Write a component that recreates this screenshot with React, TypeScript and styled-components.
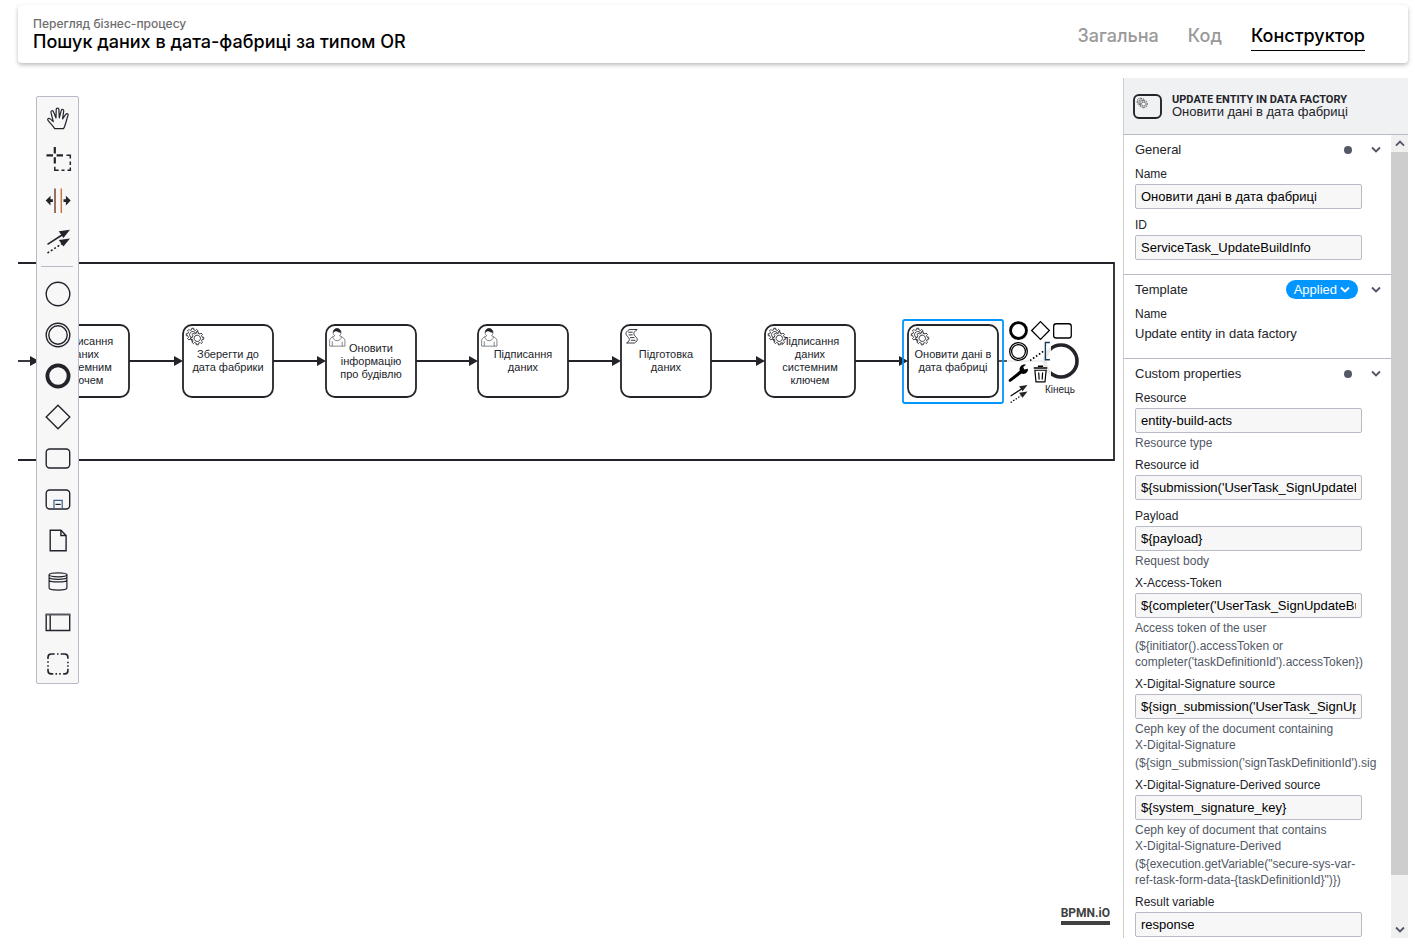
import React from 'react';
import styled, { createGlobalStyle, css } from 'styled-components';

const INK = '#22242a';
const BLUE = '#0095ff';
const LINE = '#b9bac8';

const GlobalStyle = createGlobalStyle`
  *, *::before, *::after { box-sizing: border-box; }
  body { margin: 0; background: #fff; font-family: "Liberation Sans", Arial, sans-serif; }
  button, input { font: inherit; color: inherit; }
`;

const Page = styled.div`
  display: flex;
  flex-direction: column;
  gap: 15px;
  height: 100vh;
  padding: 5px 7px 12px 18px;
`;

/* ---------- header ---------- */

const Header = styled.header`
  display: flex;
  justify-content: space-between;
  align-items: center;
  flex: none;
  height: 58px;
  padding: 0 43px 0 15px;
  border-radius: 4px;
  background: #fff;
  box-shadow: 0 2px 4px rgba(0, 0, 0, 0.27);
  font-family: Inter, "Liberation Sans", sans-serif;
`;

const Subtitle = styled.p`
  margin: 0;
  font-size: 12px;
  font-weight: 500;
  line-height: 16px;
  color: #6e6e6e;
`;

const Title = styled.h1`
  margin: 0;
  font-size: 18px;
  font-weight: 500;
  line-height: 20px;
  color: #000;
`;

const Tabs = styled.nav`
  display: flex;
  gap: 29px;
`;

const Tab = styled.a<{ $active?: boolean }>`
  padding-top: 4px;
  border-bottom: 1px solid ${p => (p.$active ? '#000' : 'transparent')};
  font-size: 18px;
  font-weight: 500;
  line-height: 28px;
  color: ${p => (p.$active ? '#000' : '#999')};
  text-decoration: none;
`;

/* ---------- workspace ---------- */

const Workspace = styled.main`
  display: flex;
  flex: 1;
  min-height: 0;
`;

const Canvas = styled.section`
  position: relative;
  flex: 1;
  min-width: 0;
  overflow: hidden;
`;

const Diagram = styled.svg`
  display: block;
  width: 100%;
  height: 100%;
`;

const TaskLabel = styled.text`
  font-size: 11px;
  fill: ${INK};
  text-anchor: middle;
`;

const EventLabel = styled(TaskLabel)`
  font-size: 10px;
`;

const Palette = styled.div`
  position: absolute;
  top: 18px;
  left: 18px;
  display: flex;
  flex-direction: column;
  width: 43px;
  border: 1px solid ${LINE};
  border-radius: 2px;
  background: #f7f7f8;
`;

const PaletteSeparator = styled.hr`
  width: 32px;
  margin: 5px auto 6px 4px;
  border: 0;
  border-top: 1px solid ${LINE};
`;

const iconButton = css`
  display: flex;
  align-items: center;
  justify-content: center;
  padding: 0;
  border: 0;
  background: none;
  cursor: pointer;
`;

const PaletteButton = styled.button`
  ${iconButton}
  height: 41px;
  padding-top: 1px;
`;

const ContextPad = styled.div`
  position: absolute;
  top: 242px;
  left: 989px;
  display: grid;
  grid-template-columns: repeat(3, 22px);
  grid-auto-rows: 21px;
`;

const PadButton = styled.button<{ $rowStart?: boolean }>`
  ${iconButton}
  ${p => p.$rowStart && 'grid-column-start: 1;'}
  background: rgba(255, 255, 255, 0.9);
`;

const Watermark = styled.a`
  position: absolute;
  right: 13px;
  bottom: 13px;
  border-bottom: 4px solid #404040;
  font-family: Roboto, "Liberation Sans", sans-serif;
  font-size: 12px;
  font-weight: 700;
  line-height: 16px;
  color: #404040;
  text-decoration: none;
`;

/* ---------- properties panel ---------- */

const Panel = styled.aside`
  display: flex;
  flex-direction: column;
  flex: none;
  width: 285px;
  border-left: 1px solid #ccc;
  color: ${INK};
`;

const PanelHeader = styled.div`
  display: flex;
  align-items: center;
  gap: 10px;
  flex: none;
  height: 57px;
  padding-left: 9px;
  border-bottom: 1px solid ${LINE};
  background: #f0f1f3;
`;

const ElementType = styled.div`
  font-family: Roboto, sans-serif;
  font-size: 11px;
  font-weight: 700;
  line-height: 12px;
  text-transform: uppercase;
`;

const ElementName = styled.div`
  font-size: 13px;
  line-height: 12px;
`;

const PanelBody = styled.div`
  display: flex;
  flex: 1;
  min-height: 0;
`;

const Groups = styled.div`
  flex: 1;
  min-width: 0;
  overflow: hidden;
`;

const Group = styled.section`
  padding: 0 29px 8px 11px;
  border-bottom: 1px solid ${LINE};
`;

const GroupHeader = styled.div`
  display: flex;
  align-items: center;
  height: 29px;
  margin-right: -20px;
`;

const GroupTitle = styled.h2`
  flex: 1;
  margin: 0;
  font-size: 13px;
  font-weight: 400;
`;

const Dot = styled.span`
  width: 8px;
  height: 8px;
  margin-right: 18px;
  border-radius: 50%;
  background: #525866;
`;

const Toggle = styled.button`
  ${iconButton}
  width: 12px;
  height: 20px;
`;

const Applied = styled.button`
  display: flex;
  align-items: center;
  gap: 3px;
  height: 19px;
  margin-right: 12px;
  padding: 0 8px;
  border: 0;
  border-radius: 10px;
  background: ${BLUE};
  color: #fff;
  font-size: 13px;
  line-height: 19px;
`;

const FieldBox = styled.div`
  padding-bottom: 6px;
`;

const Label = styled.label`
  display: block;
  font-size: 12px;
  line-height: 20px;
`;

const StaticLabel = styled.div`
  font-size: 12px;
  line-height: 20px;
`;

const StaticText = styled.div`
  font-size: 13px;
  line-height: 20px;
`;

const TextInput = styled.input`
  display: block;
  width: 100%;
  height: 25px;
  padding: 0 5px;
  border: 1px solid ${LINE};
  border-radius: 2px;
  background: #f7f7f8;
  color: #000;
  font-size: 13px;
`;

const Description = styled.div`
  margin: 2px 0 -2px;
  font-size: 12px;
  line-height: 16px;
  color: #525866;
  white-space: nowrap;
`;

const Expression = styled.div`
  margin-top: 2px;
`;

const Scrollbar = styled.div`
  display: flex;
  flex-direction: column;
  flex: none;
  width: 17px;
  background: #f0f0f0;
`;

const ScrollButton = styled.button`
  ${iconButton}
  height: 17px;
`;

const ScrollTrack = styled.div`
  flex: 1;
`;

const ScrollThumb = styled.div`
  height: 94%;
  background: #cdcdcd;
`;

/* ---------- icons ---------- */

type IconProps = { size?: number; children: React.ReactNode; color?: string; weight?: number };

const Icon = ({ size = 28, children, color = INK, weight = 1.4 }: IconProps) => (
  <svg width={size} height={size} viewBox="0 0 28 28" fill="none" stroke={color} strokeWidth={weight} aria-hidden="true">
    {children}
  </svg>
);

const Chevron = ({ up, color = '#525866', size = 10 }: { up?: boolean; color?: string; size?: number }) => (
  <svg width={size} height={size} viewBox="0 0 10 10" fill="none" stroke={color} strokeWidth={1.9} aria-hidden="true">
    <path d={up ? 'M1 6.7 5 2.7 9 6.7' : 'M1 2.5 5 6.5 9 2.5'} />
  </svg>
);

const hand = (
  <path
    strokeLinejoin="round"
    strokeWidth={1.2}
    d="M10.5 24.6C9.5 22 6.5 20 4 16.4C3 14.6 4.8 13.6 6.2 14.9L9.3 17.6L7 8.6C6.6 6.6 8.9 6 9.5 7.8L12 14L12.2 5.4C12.2 3.6 14.8 3.6 14.9 5.4L15.3 13.8L17.3 6.4C17.9 4.8 20 5.4 19.7 7.1L18.6 14.8L21.9 10.2C23 8.9 24.7 9.9 24 11.5C22.5 15 21.8 21 19.5 24.6Z"
  />
);

const lasso = (
  <>
    <path strokeWidth={2.2} d="M2.5 10.3H9M12.6 10.3H19M10.8 2V8.6M10.8 12.2V18.6" />
    <path strokeWidth={1.5} d="M22.5 10.3H26.3V13.5M26.3 16.5V20M26.3 22.5V25.2H23.5M20.5 25.2H17.5M14.7 25.2H10.8V21.8" />
  </>
);

const space = (
  <>
    <path stroke="#7d4238" strokeWidth={1.5} d="M11 2.5V27" />
    <path stroke="#c8763c" strokeWidth={1.5} d="M17.3 2.5V27" />
    <path fill={INK} stroke="none" d="M1.7 14.6 6.5 9.8V13.2H8.9V16H6.5V19.4ZM26.7 14.6 21.9 9.8V13.2H19.5V16H21.9V19.4Z" />
  </>
);

const connect = (
  <>
    <path strokeWidth={1.6} d="M3.5 17.4 18 8" />
    <path strokeWidth={1.6} strokeDasharray="2 2" d="M3.5 26 18 16.6" />
    <path fill={INK} stroke="none" d="M26 2.7 19.4 10.9 14.8 4.3ZM26 11.4 19.4 19.6 14.8 13Z" />
  </>
);

const startEvent = <circle cx={14} cy={14} r={11.8} />;
const intermediateEvent = (
  <>
    <circle cx={14} cy={14} r={11.8} />
    <circle cx={14} cy={14} r={9.2} />
  </>
);
const endEvent = <circle cx={14} cy={14} r={10.6} strokeWidth={3.8} />;
const gateway = <path d="M14 2.2 25.8 14 14 25.8 2.2 14Z" />;
const taskShape = <rect x={2.2} y={5} width={23.5} height={19} rx={3.5} />;

const subProcess = (
  <>
    <rect x={2.2} y={5} width={23.5} height={19} rx={3.5} />
    <path stroke="#3a5f8c" strokeWidth={1.2} d="M10 24V15.3H18.2V24" />
    <path strokeWidth={1.2} d="M11.5 19.4H16.7" />
  </>
);

const dataObject = <path d="M6.2 4.3H16.9L22.1 9.5V24.7H6.2ZM16.9 4.3V9.5H22.1" />;

const dataStore = (
  <>
    <ellipse cx={14} cy={7.8} rx={8.9} ry={2} strokeWidth={1.2} />
    <path
      strokeWidth={1.2}
      d="M5.1 7.8V21C5.1 23.7 22.9 23.7 22.9 21V7.8M5.1 10.3C5.1 13 22.9 13 22.9 10.3M5.1 12.9C5.1 15.6 22.9 15.6 22.9 12.9"
    />
  </>
);

const participant = (
  <>
    <path d="M2.2 6.5V22.5H25.7V6.5M6.2 6.5V22.5" />
    <path strokeWidth={2} stroke="#55575c" d="M1.5 6.5H26.4" />
  </>
);

const groupShape = (
  <path
    strokeWidth={1.6}
    d="M4 10V8.3Q4 5 7.2 5H10.7M13 5H14.5M16.7 5H20.7Q23.9 5 23.9 8.3V9.7M23.9 12.7V14.2M23.9 16.2V17.7M23.9 19.7V21.7Q23.9 24.9 20.7 24.9H19.2M16.7 24.9H15.2M13 24.9H11.5M9.2 24.9H7.2Q4 24.9 4 21.7V19.7M4 17.7V16.2M4 13.7V12.2"
  />
);

const annotation = (
  <>
    <path strokeWidth={2.2} strokeDasharray="2.2 2.6" d="M0 26 19 13" />
    <path strokeWidth={1.8} stroke="#173a5c" d="M26.5 2H20.5V25H26.5" />
  </>
);

const wrench = (
  <path
    fill="#000"
    stroke="none"
    d="M1.6 23 15.6 11.8C14.6 6.4 19 2.2 24 3.8L20.3 6.6 21.7 10 26.6 9C27 13.8 22.4 17.1 18.2 15.4L4 26C1.6 27-.2 24.8 1.6 23Z"
  />
);

const trash = (
  <>
    <path strokeWidth={2.2} d="M5 8H23M10.5 5.6H17.5" />
    <path strokeWidth={1.6} d="M6.5 11H21.5L20 26.6H8ZM11.6 14 12.2 23.5M16.8 14 16.2 23.5" />
  </>
);

const GEAR =
  'v-1.71335c.352326-.0705.703932-.17838 1.047628-.32133.344416-.14465.665822-.32133.966377-.52145l1.19431 1.18005 1.567487-1.57688-1.195028-1.18014c.403376-.61394.683079-1.29908.825447-2.01824l1.622133-.01v-2.2196l-1.636514.01c-.07333-.35153-.178319-.70024-.323564-1.04372-.145244-.34406-.321407-.6644-.522735-.96217l1.131035-1.13631-1.583305-1.56293-1.129598 1.13589c-.614052-.40108-1.302883-.68093-2.022633-.82247l.0093-1.61852h-2.241173l.0042 1.63124c-.353763.0736-.705369.17977-1.049785.32371-.344415.14437-.665102.32092-.9635006.52006l-1.1698628-1.15823-1.5667691 1.5792 1.1684265 1.15669c-.4026573.61283-.68308 1.29797-.8247287 2.01713l-1.6588041.003v2.22174l1.6724648-.006c.073327.35077.1797598.70243.3242851 1.04472.1452428.34448.3214064.6644.5227339.96066l-1.1993431 1.19723 1.5840256 1.56011 1.1964668-1.19348c.6140517.40346 1.3028827.68232 2.0233517.82331l.000719 1.69892h2.226848zm.221462-3.9957c-1.788948.7502-3.8576-.0928-4.6097055-1.87438-.7521065-1.78321.090598-3.84627 1.8802645-4.59604 1.78823-.74936 3.856881.0929 4.608987 1.87437.752106 1.78165-.0906 3.84612-1.879546 4.59605z';

const Gears = () => (
  <g fill="#fff" stroke={INK} strokeWidth={1}>
    <path d={`m12 18${GEAR}`} />
    <circle cx={16} cy={16} r={4.5} stroke="none" />
    <path d={`m17 22${GEAR}`} />
  </g>
);

const Person = () => (
  <g fill="#fff" stroke={INK} strokeWidth={0.6}>
    <path d="m15 12c.909-.845 1.594-2.049 1.594-3.385 0-2.554-1.805-4.622-4.357-4.622-2.552 0-4.288 2.068-4.288 4.622 0 1.348.974 2.562 1.896 3.405-.529.187-5.669 2.097-5.794 4.756v6.718h17v-6.718c0-2.298-5.528-4.595-6.051-4.776zm-8 6l0 5.5m11 0l0-5" />
    <path fill="none" d="m15 12m2.162 1.009c0 2.447-2.158 4.431-4.821 4.431-2.665 0-4.822-1.981-4.822-4.431" />
    <path fill={INK} d="m15 12m-6.9-3.8c0 0 2.251-2.358 4.274-1.177 2.024 1.181 4.221 1.537 4.124.965-.098-.57-.117-3.791-4.191-4.136-3.572-.001-4.208 3.367-4.207 4.348z" />
  </g>
);

const Script = () => (
  <path
    fill="none"
    stroke={INK}
    d="m15 20c9.966553-6.27276-8.000926-7.91932 2.968968-14.938l-8.802728 0c-10.969894 7.01868 6.997585 8.66524-2.968967 14.938zm-7-12l5 0m-4.5 3l4.5 0m-3 3l5 0m-4 3l5 0"
  />
);

/* ---------- diagram ---------- */

type TaskKind = 'service' | 'user' | 'script';
type TaskData = { x: number; kind: TaskKind; lines: string[] };

const MARKERS: Record<TaskKind, React.ReactNode> = {
  service: <Gears />,
  user: <Person />,
  script: <Script />,
};

const TASK_TOP = 247;
const TASK_WIDTH = 90;
const TASK_HEIGHT = 72;
const FLOW_Y = 283;
const LINE_HEIGHT = 13;

const TASKS: TaskData[] = [
  { x: 21, kind: 'service', lines: ['Підписання', 'даних', 'системним', 'ключем'] },
  { x: 165, kind: 'service', lines: ['Зберегти до', 'дата фабрики'] },
  { x: 308, kind: 'user', lines: ['Оновити', 'інформацію', 'про будівлю'] },
  { x: 460, kind: 'user', lines: ['Підписання', 'даних'] },
  { x: 603, kind: 'script', lines: ['Підготовка', 'даних'] },
  { x: 747, kind: 'service', lines: ['Підписання', 'даних', 'системним', 'ключем'] },
  { x: 890, kind: 'service', lines: ['Оновити дані в', 'дата фабриці'] },
];

const Task = ({ x, kind, lines }: TaskData) => {
  const firstLine = TASK_TOP + 46 - Math.floor((lines.length * LINE_HEIGHT) / 2);
  return (
    <g>
      <rect x={x} y={TASK_TOP} width={TASK_WIDTH} height={TASK_HEIGHT} rx={9} fill="#fff" stroke={INK} strokeWidth={1.8} />
      {lines.map((line, i) => (
        <TaskLabel key={line} x={x + TASK_WIDTH / 2} y={firstLine + i * LINE_HEIGHT}>
          {line}
        </TaskLabel>
      ))}
      <g transform={`translate(${x} ${TASK_TOP}) scale(0.9)`}>{MARKERS[kind]}</g>
    </g>
  );
};

const Flow = ({ from, to }: { from: number; to: number }) => (
  <g>
    <path d={`M${from} ${FLOW_Y}H${to - 6}`} stroke={INK} strokeWidth={1.8} />
    <path d={`M${to - 9} ${FLOW_Y - 5}L${to} ${FLOW_Y}L${to - 9} ${FLOW_Y + 5}Z`} fill={INK} />
  </g>
);

const ProcessDiagram = () => (
  <Diagram role="img" aria-label="Діаграма бізнес-процесу">
    <path d="M-10 185H1096V382H-10" fill="none" stroke={INK} strokeWidth={1.8} />
    {TASKS.map((task, i) => (
      <Flow key={task.x} from={i ? TASKS[i - 1].x + TASK_WIDTH : -10} to={task.x} />
    ))}
    <path d={`M980 ${FLOW_Y}H1027`} stroke={INK} strokeWidth={1.6} />
    {TASKS.map(task => (
      <Task key={task.x} {...task} />
    ))}
    <rect x={885} y={242} width={100} height={83} rx={2} fill="none" stroke={BLUE} strokeWidth={1.8} />
    <circle cx={1043} cy={FLOW_Y} r={16} fill="#fff" stroke={INK} strokeWidth={3.6} />
    <EventLabel x={1042} y={315}>Кінець</EventLabel>
  </Diagram>
);

const TOOLS: [string, React.ReactNode][] = [
  ['Рука', hand],
  ['Ласо', lasso],
  ['Простір', space],
  ['Зʼєднання', connect],
];

const SHAPES: [string, React.ReactNode][] = [
  ['Початкова подія', startEvent],
  ['Проміжна подія', intermediateEvent],
  ['Кінцева подія', endEvent],
  ['Шлюз', gateway],
  ['Задача', taskShape],
  ['Підпроцес', subProcess],
  ['Обʼєкт даних', dataObject],
  ['Сховище даних', dataStore],
  ['Учасник', participant],
  ['Група', groupShape],
];

const PAD: [string, React.ReactNode, boolean?][] = [
  ['Додати кінцеву подію', endEvent],
  ['Додати шлюз', gateway],
  ['Додати задачу', taskShape],
  ['Додати проміжну подію', intermediateEvent],
  ['Додати анотацію', annotation],
  ['Змінити тип', wrench, true],
  ['Видалити', trash],
  ['Зʼєднати', connect, true],
];

/* ---------- properties ---------- */

type FieldProps = { id: string; label: string; value: string; children?: React.ReactNode };

const Field = ({ id, label, value, children }: FieldProps) => (
  <FieldBox>
    <Label htmlFor={id}>{label}</Label>
    <TextInput id={id} defaultValue={value} />
    {children && <Description>{children}</Description>}
  </FieldBox>
);

const ToggleButton = () => (
  <Toggle aria-label="Згорнути">
    <Chevron />
  </Toggle>
);

export default function App() {
  return (
    <Page>
      <GlobalStyle />
      <Header>
        <div>
          <Subtitle>Перегляд бізнес-процесу</Subtitle>
          <Title>Пошук даних в дата-фабриці за типом OR</Title>
        </div>
        <Tabs>
          <Tab href="#general">Загальна</Tab>
          <Tab href="#code">Код</Tab>
          <Tab href="#designer" $active>Конструктор</Tab>
        </Tabs>
      </Header>

      <Workspace>
        <Canvas>
          <ProcessDiagram />
          <ContextPad>
            {PAD.map(([name, icon, rowStart]) => (
              <PadButton key={name} aria-label={name} $rowStart={rowStart}>
                <Icon size={21} color="#000" weight={1.7}>
                  {icon}
                </Icon>
              </PadButton>
            ))}
          </ContextPad>
          <Palette>
            {TOOLS.map(([name, icon]) => (
              <PaletteButton key={name} aria-label={name}>
                <Icon>{icon}</Icon>
              </PaletteButton>
            ))}
            <PaletteSeparator />
            {SHAPES.map(([name, icon]) => (
              <PaletteButton key={name} aria-label={name}>
                <Icon>{icon}</Icon>
              </PaletteButton>
            ))}
          </Palette>
          <Watermark href="#bpmn-io">BPMN.iO</Watermark>
        </Canvas>

        <Panel>
          <PanelHeader>
            <svg width={29} height={25} viewBox="0 0 29 25" aria-hidden="true">
              <rect x={1} y={1} width={27} height={23} rx={5} fill="none" stroke={INK} strokeWidth={1.9} />
              <g transform="translate(2 2) scale(0.54)">
                <Gears />
              </g>
            </svg>
            <div>
              <ElementType>Update entity in data factory</ElementType>
              <ElementName>Оновити дані в дата фабриці</ElementName>
            </div>
          </PanelHeader>
          <PanelBody>
            <Groups>
              <Group>
                <GroupHeader>
                  <GroupTitle>General</GroupTitle>
                  <Dot />
                  <ToggleButton />
                </GroupHeader>
                <Field id="name" label="Name" value="Оновити дані в дата фабриці" />
                <Field id="element-id" label="ID" value="ServiceTask_UpdateBuildInfo" />
              </Group>
              <Group>
                <GroupHeader>
                  <GroupTitle>Template</GroupTitle>
                  <Applied>
                    Applied
                    <Chevron color="#fff" />
                  </Applied>
                  <ToggleButton />
                </GroupHeader>
                <FieldBox>
                  <StaticLabel>Name</StaticLabel>
                  <StaticText>Update entity in data factory</StaticText>
                </FieldBox>
              </Group>
              <Group>
                <GroupHeader>
                  <GroupTitle>Custom properties</GroupTitle>
                  <Dot />
                  <ToggleButton />
                </GroupHeader>
                <Field id="resource" label="Resource" value="entity-build-acts">
                  Resource type
                </Field>
                <Field id="resource-id" label="Resource id" value="${submission('UserTask_SignUpdateBuildInfo').formData.prop('id').value()}" />
                <Field id="payload" label="Payload" value="${payload}">
                  Request body
                </Field>
                <Field id="token" label="X-Access-Token" value="${completer('UserTask_SignUpdateBuildInfo').accessToken}">
                  Access token of the user
                  <Expression>
                    {'(${initiator().accessToken or'}
                    <br />
                    {"completer('taskDefinitionId').accessToken})"}
                  </Expression>
                </Field>
                <Field id="signature" label="X-Digital-Signature source" value="${sign_submission('UserTask_SignUpdateBuildInfo').signatureDocumentId}">
                  Ceph key of the document containing
                  <br />
                  X-Digital-Signature
                  <Expression>{"(${sign_submission('signTaskDefinitionId').sig"}</Expression>
                </Field>
                <Field id="derived" label="X-Digital-Signature-Derived source" value="${system_signature_key}">
                  Ceph key of document that contains
                  <br />
                  X-Digital-Signature-Derived
                  <Expression>
                    {'(${execution.getVariable("secure-sys-var-'}
                    <br />
                    {'ref-task-form-data-{taskDefinitionId}")})'}
                  </Expression>
                </Field>
                <Field id="result" label="Result variable" value="response" />
              </Group>
            </Groups>
            <Scrollbar>
              <ScrollButton aria-label="Вгору">
                <Chevron up />
              </ScrollButton>
              <ScrollTrack>
                <ScrollThumb />
              </ScrollTrack>
              <ScrollButton aria-label="Вниз">
                <Chevron />
              </ScrollButton>
            </Scrollbar>
          </PanelBody>
        </Panel>
      </Workspace>
    </Page>
  );
}
